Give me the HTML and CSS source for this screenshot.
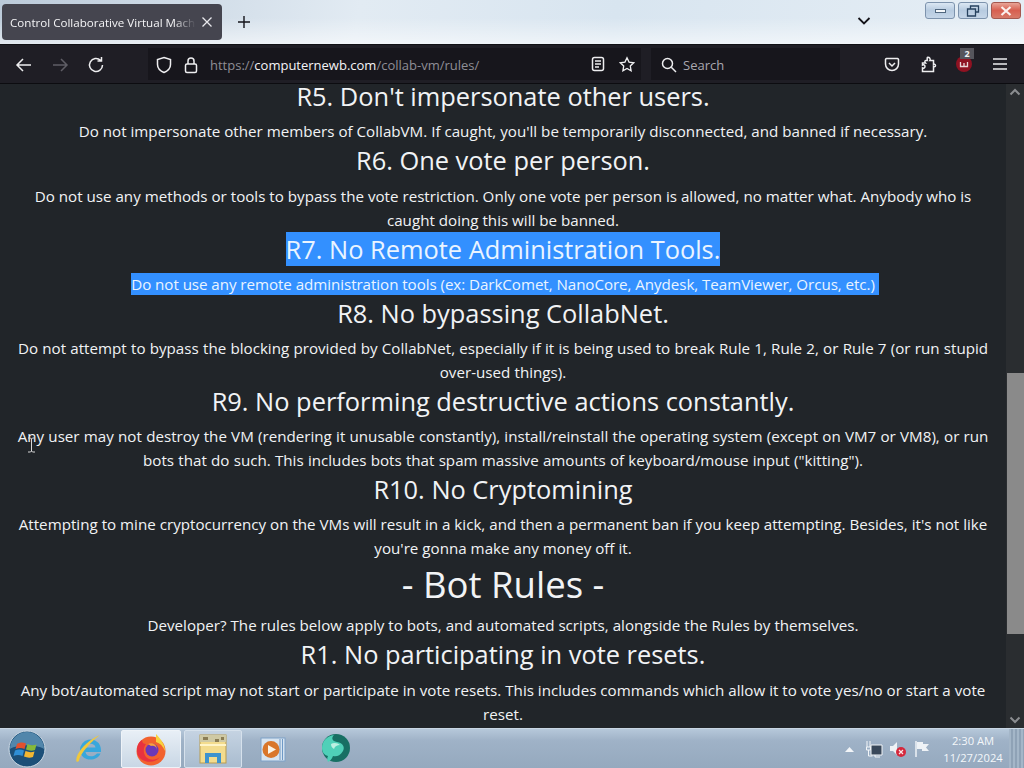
FILE: index.html
```html
<!DOCTYPE html>
<html lang="en">
<head>
    <meta charset="UTF-8">
    <title>Control Collaborative Virtual Machines</title>
    <link rel="stylesheet" href="styles.css">
</head>
<body>
    <div class="tabbar">
        <div class="tab">
            <span class="tab-title">Control Collaborative Virtual Machines</span>
            <svg class="tab-close" width="12" height="12" viewBox="0 0 12 12"><path d="M1.5 1.5l9 9M10.5 1.5l-9 9"/></svg>
        </div>
        <svg class="new-tab" width="14" height="14" viewBox="0 0 14 14"><path d="M7 1v12M1 7h12"/></svg>
        <svg class="tab-list" width="14" height="10" viewBox="0 0 14 10"><path d="M1.5 2l5.5 5.5L12.500 2"/></svg>
        <div class="win-buttons">
            <div class="win-btn"><span class="win-min"></span></div>
            <div class="win-btn">
                <svg width="14" height="12" viewBox="0 0 14 12"><path d="M4.500 3.500V1h8v6H10M1.500 4h8v7h-8z"/></svg>
            </div>
            <div class="win-btn win-close">
                <svg width="14" height="10" viewBox="0 0 14 10"><path d="M2.500 1l9 8M11.500 1l-9 8"/></svg>
            </div>
        </div>
    </div>

    <div class="toolbar">
        <svg class="tool first" width="18" height="16" viewBox="0 0 18 16"><path d="M16 8H2M8 2L2 8l6 6"/></svg>
        <svg class="tool dim" width="18" height="16" viewBox="0 0 18 16"><path d="M2 8h14M10 2l6 6-6 6"/></svg>
        <svg class="tool" width="18" height="18" viewBox="0 0 18 18"><path d="M15.500 9a6.500 6.500 0 1 1-2-4.700M14.500 1v4h-4"/></svg>
        <div class="urlbar">
            <svg class="tool" width="16" height="18" viewBox="0 0 16 18"><path d="M8 1.500l6.500 2v5c0 4-3 6.500-6.500 8-3.500-1.500-6.500-4-6.500-8v-5z"/></svg>
            <svg class="tool" width="14" height="18" viewBox="0 0 14 18"><rect x="1.500" y="8" width="11" height="8.500" rx="1.500"/><path d="M4 8V5a3 3 0 0 1 6 0v3"/></svg>
            <div class="url"><span>https://</span>computernewb.com<span>/collab-vm/rules/</span></div>
            <svg class="tool" width="14" height="16" viewBox="0 0 14 16"><rect x="1.500" y="1.500" width="11" height="13" rx="2"/><path d="M4 5h6M4 8h6M4 11h4"/></svg>
            <svg class="tool" width="16" height="16" viewBox="0 0 18 17"><path d="M9 1.500l2.300 4.900 5.200.7-3.800 3.700.9 5.300L9 13.500l-4.600 2.600.9-5.300L1.500 7.100l5.200-.7z"/></svg>
        </div>
        <div class="searchbar">
            <svg class="tool" width="16" height="16" viewBox="0 0 16 16"><circle cx="6.500" cy="6.500" r="5"/><path d="M10.300 10.300L15 15"/></svg>
            <span>Search</span>
        </div>
        <svg class="tool pocket" width="16" height="15" viewBox="0 0 16 15"><path d="M2.500 1.500h11a1.500 1.500 0 0 1 1 1v4.500a6.500 6.500 0 0 1-13 0V2.500a1.500 1.500 0 0 1 1-1z"/><path d="M5 6l3 3 3-3"/></svg>
        <svg class="tool puzzle" width="16" height="17" viewBox="0 0 16 17"><path d="M1.500 7h3c-1-1-.8-2.500.3-2.500h1.400V2c0-1 .800-1 1.800-.5 1 .5 1.500 2.500 1 3h3.500v4c1-.5 2-.2 2 1s-1 1.500-2 1v5H1.500v-3.500c1 .5 2.500 0 2.500-1.500S2.500 8.500 1.500 9z"/></svg>
        <div class="ublock">
            <svg width="18" height="18" viewBox="0 0 18 18"><circle cx="9" cy="9" r="8" fill="#8f1222"/><path d="M5.500 7v4.500h7V7M9 8v3" fill="none" stroke="#e9d5d8" stroke-width="1.300"/></svg>
            <span class="badge">2</span>
        </div>
        <svg class="tool menu" width="16" height="12" viewBox="0 0 16 12"><path d="M1 1h14M1 6h14M1 11h14"/></svg>
    </div>

    <div class="viewport">
        <div class="page">
            <div class="rules">
                <h3>R5. Don't impersonate other users.</h3>
                <p>Do not impersonate other members of CollabVM. If caught, you'll be temporarily disconnected, and banned if necessary.</p>
                <h3>R6. One vote per person.</h3>
                <p>Do not use any methods or tools to bypass the vote restriction. Only one vote per person is allowed, no matter what. Anybody who is caught doing this will be banned.</p>
                <h3><span class="picked picked-head">R7. No Remote Administration Tools.</span></h3>
                <p><span class="picked picked-line">Do not use any remote administration tools (ex: DarkComet, NanoCore, Anydesk, TeamViewer, Orcus, etc.)&nbsp;</span></p>
                <h3>R8. No bypassing CollabNet.</h3>
                <p class="wide">Do not attempt to bypass the blocking provided by CollabNet, especially if it is being used to break Rule 1, Rule 2, or Rule 7 (or run stupid over-used things).</p>
                <h3>R9. No performing destructive actions constantly.</h3>
                <p class="wide">Any user may not destroy the VM (rendering it unusable constantly), install/reinstall the operating system (except on VM7 or VM8), or run bots that do such. This includes bots that spam massive amounts of keyboard/mouse input ("kitting").</p>
                <h3>R10. No Cryptomining</h3>
                <p>Attempting to mine cryptocurrency on the VMs will result in a kick, and then a permanent ban if you keep attempting. Besides, it's not like you're gonna make any money off it.</p>
                <h1>- Bot Rules -</h1>
                <p>Developer? The rules below apply to bots, and automated scripts, alongside the Rules by themselves.</p>
                <h3>R1. No participating in vote resets.</h3>
                <p>Any bot/automated script may not start or participate in vote resets. This includes commands which allow it to vote yes/no or start a vote reset.</p>
            </div>
            <div class="scrollbar">
                <svg width="12" height="8" viewBox="0 0 12 8"><path d="M1.500 6.500L6 2l4.500 4.500"/></svg>
                <div class="track"><div class="thumb"></div></div>
                <svg width="12" height="8" viewBox="0 0 12 8"><path d="M1.500 1.500L6 6l4.500-4.500"/></svg>
            </div>
        </div>
        <svg class="cursor" width="9" height="16" viewBox="0 0 9 16"><path d="M1 1h2.500l1 1 1-1H8M4.500 2v12M1 15h2.500l1-1 1 1H8"/></svg>
    </div>

    <div class="taskbar">
        <svg class="start" width="38" height="38" viewBox="0 0 38 38">
            <circle cx="19" cy="19" r="18" fill="#1c4f78" stroke="#cfdbe6" stroke-width="1"/>
            <path d="M2 19a17 17 0 0 1 34 0c-8-5-26-5-34 0z" fill="#7fb5d6" opacity=".55"/>
            <path d="M9 14c3-2 6-2 9-.5l-1.500 5.500c-3-1.500-6-1.500-9 0z" fill="#e2512e"/>
            <path d="M19.500 14c3 1.500 6 1.500 9 .5l-1.500 5.500c-3 1-6 .8-9-.5z" fill="#86b93a"/>
            <path d="M7 20.500c3-1.500 6-1.500 9 0L14.500 26c-3-1.500-6-1.500-9 0z" fill="#2f8fd6"/>
            <path d="M17.500 21c3 1.300 6 1.500 9 .5L25 27c-3 1-6 .8-9-.5z" fill="#f2b632"/>
        </svg>
        <div class="task ie">
            <svg width="34" height="34" viewBox="0 0 34 34">
                <path d="M7 18a10.500 10.500 0 0 1 20-4.500c1 2.500 1 4.500 1 6.500H12.500c.5 5 7.500 6 11.500 1.500h3.500c-4 9-20 8-20.500-3.500zM12.500 15.500h10c-.5-5-9.500-5-10 0z" fill="#38a7dc"/>
                <path d="M4 30C1 26 9 11 27 3c-7 5-20 18-21 26z" fill="#f0c83c"/>
            </svg>
        </div>
        <div class="task active">
            <svg width="34" height="36" viewBox="0 0 34 36">
                <circle cx="17" cy="20" r="14.500" fill="#f2622e"/>
                <path d="M22 3c5 5 9 11 9 17-2-5-5-8-9-9z" fill="#f7d23e"/>
                <path d="M3 20c0-6 2-9 5-11 0 3 2 4 4 4-3 4-3 9 0 13 3 3 9 4 14 0-5 8-23 6-23-6z" fill="#e8323f"/>
                <circle cx="18" cy="19" r="6.500" fill="#6a38b8"/>
                <path d="M14 13c5-2 9 1 9 6 0-3-3-5-6-4z" fill="#f9a33a"/>
            </svg>
        </div>
        <div class="task opened">
            <svg width="34" height="34" viewBox="0 0 34 34">
                <rect x="4" y="3" width="26" height="28" fill="#f3dc8e" stroke="#b79b50"/>
                <path d="M4 3h26v7H4z" fill="#cfc9a4"/>
                <path d="M7 5h5v3H7zM19 7h4v3h-4zM25 5h3v3h-3z" fill="#8b7d55"/>
                <path d="M4 13h26" stroke="#fff4c8" stroke-width="2"/>
                <path d="M9 31V21h16v10h-4v-6h-8v6z" fill="#3d93cf"/>
            </svg>
        </div>
        <div class="task">
            <svg width="26" height="26" viewBox="0 0 26 26">
                <rect x="1" y="2" width="24" height="23" fill="#d7e4f0" stroke="#7fa2c8"/>
                <path d="M20 3v21M22.500 3v21" stroke="#6f99c6"/>
                <circle cx="11" cy="13.500" r="8.500" fill="#d9762a"/>
                <path d="M8 9l8 4.500L8 18z" fill="#fbf3e4"/>
            </svg>
        </div>
        <div class="task">
            <svg width="34" height="32" viewBox="0 0 34 32">
                <circle cx="18" cy="15" r="14" fill="#176f63"/>
                <path d="M4 15C4 8 9 3 16 2c-3 3-2 6 3 7 6 1 8 5 6 9-3 5-7 6-10 5-1 3-3 5-5 6-1-2-1-4 0-6-4-1-6-4-6-8z" fill="#4fd0b8"/>
                <path d="M13 11c3-2 7-1 9 1-3 0-5 1-6 4-2-1-3-3-3-5z" fill="#bdf0e2"/>
            </svg>
        </div>
        <div class="tray">
            <svg class="tray-up" width="9" height="6" viewBox="0 0 9 6"><path d="M0 6l4.500-5L9 6z"/></svg>
            <svg width="18" height="18" viewBox="0 0 18 18">
                <path d="M6 5h11v10H6z" fill="#39485a" stroke="#f2f5f8"/>
                <path d="M10 15v2h5M2 1v6M5 1v6M1.500 7h4v3h-4zM3.500 10v6h4" fill="none" stroke="#f2f5f8"/>
            </svg>
            <svg width="18" height="18" viewBox="0 0 18 18">
                <path d="M1 6h3l4-4v13l-4-4H1z" fill="#eef2f6"/>
                <circle cx="12" cy="12" r="5" fill="#d5283c"/>
                <path d="M10 10l4 4M14 10l-4 4" stroke="#fbe6e8" stroke-width="1.200"/>
            </svg>
            <svg width="18" height="18" viewBox="0 0 18 18">
                <path d="M3 1v16" stroke="#eef2f6" stroke-width="1.500"/>
                <path d="M4 2h6v2h6l-3 3.500 3 3.500H9V9H4z" fill="#eef2f6"/>
            </svg>
            <div class="clock">
                <div>2:30 AM</div>
                <div>11/27/2024</div>
            </div>
            <div class="show-desktop"></div>
        </div>
    </div>
</body>
</html>
```

FILE: styles.css
```css
* {
    margin: 0;
    padding: 0;
    box-sizing: border-box;
}

html, body {
    width: 1024px;
    height: 768px;
    overflow: hidden;
}

body {
    display: flex;
    flex-direction: column;
    font-family: "Open Sans", "Noto Sans", sans-serif;
    background: #212529;
}

/* top strip */
.tabbar {
    height: 44px;
    display: flex;
    align-items: flex-start;
    background: linear-gradient(180deg, rgba(255,255,255,0) 40%, rgba(255,255,255,.55) 100%),
        linear-gradient(100deg, #bccbda 0%, #e2ebf3 35%, #d8e5f0 60%, #e6eef5 100%);
    position: relative;
}

.tab {
    width: 220px;
    height: 36px;
    margin: 4px 0 0 2px;
    padding: 0 9px 0 8px;
    display: flex;
    align-items: center;
    justify-content: space-between;
    background: #45454f;
    border-radius: 4px;
    color: #f4f4f6;
    font-size: 11.600px;
}

.tab-title {
    width: 186px;
    white-space: nowrap;
    overflow: hidden;
    -webkit-mask-image: linear-gradient(90deg, #000 88%, transparent);
    mask-image: linear-gradient(90deg, #000 88%, transparent);
}

.tab-close {
    fill: none;
    stroke: #e8e8ec;
    stroke-width: 1.300;
}

.new-tab {
    margin: 15px 0 0 15px;
    fill: none;
    stroke: #15141a;
    stroke-width: 1.400;
}

.tab-list {
    margin: 16px 0 0 606px;
    fill: none;
    stroke: #15141a;
    stroke-width: 1.800;
}

.win-buttons {
    margin-left: auto;
    margin-right: 3px;
    margin-top: 2px;
    display: flex;
    gap: 3px;
}

.win-btn {
    width: 30px;
    height: 17px;
    display: flex;
    align-items: center;
    justify-content: center;
    border: 1px solid #7d93ad;
    border-radius: 3px;
    background: linear-gradient(#dbe7f3, #b7cbe0 50%, #c5d6e8);
}

.win-btn svg {
    fill: none;
    stroke: #27425f;
    stroke-width: 1.300;
}

.win-min {
    width: 11px;
    height: 4px;
    background: #f4f7fa;
    border: 1px solid #50677f;
}

.win-close {
    border-color: #a4584f;
    background: linear-gradient(#e8a497, #d75f50 50%, #d77a68);
}

.win-close svg {
    stroke: #fbf1ee;
    stroke-width: 2.200;
}

/* firefox toolbar */
.toolbar {
    height: 40px;
    display: flex;
    align-items: center;
    background: #1f1e25;
    border-top: 1px solid #101014;
    border-bottom: 1px solid #0c0c10;
}

.tool {
    flex: none;
    fill: none;
    stroke: #eeeef0;
    stroke-width: 1.500;
}

.tool.first {
    margin-left: 15px;
    margin-top: 2px;
}

.tool.first + .tool {
    margin-left: 18px;
}

.tool.dim {
    stroke: #5f5e66;
    margin-top: 2px;
}

.tool.dim + .tool {
    margin-left: 18px;
    margin-top: 2px;
}

.urlbar {
    width: 493px;
    height: 32px;
    margin-left: 43px;
    padding: 0 6px 0 8px;
    display: flex;
    align-items: center;
    background: #17161c;
}

.urlbar .tool:nth-child(-n+2) {
    margin-top: 2px;
}

.urlbar .tool:nth-child(2) {
    margin-left: 12px;
}

.url {
    margin-left: 12px;
    margin-top: 2px;
    flex: 1;
    color: #f4f4f6;
    font-size: 13px;
    white-space: nowrap;
}

.url span {
    color: #8f8e96;
}

.urlbar .tool:nth-child(4) {
    margin-right: 14px;
}

.searchbar {
    width: 189px;
    height: 32px;
    margin-left: 10px;
    padding: 2px 0 0 10px;
    display: flex;
    align-items: center;
    gap: 6px;
    background: #17161c;
    color: #a9a8b0;
    font-size: 13px;
}

.pocket {
    margin-left: 44px;
}

.puzzle {
    margin-left: 21px;
}

.ublock {
    margin-left: 18px;
    position: relative;
    width: 18px;
    height: 18px;
}

.badge {
    position: absolute;
    left: 5px;
    top: -7px;
    width: 14px;
    height: 11px;
    background: #55555c;
    color: #f2f2f4;
    font-size: 9px;
    font-weight: 700;
    line-height: 11px;
    text-align: center;
}

.menu {
    margin-left: 19px;
}

/* page content */
.viewport {
    height: 644px;
    position: relative;
    overflow: hidden;
}

.page {
    height: 100%;
    display: flex;
}

.rules {
    width: 1006px;
    height: 100%;
    padding: 0 12px;
    overflow: hidden;
    color: #f1f3f5;
    text-align: center;
}

.rules h3 {
    font-size: 25.400px;
    font-weight: 400;
    line-height: 32.200px;
    margin-bottom: 7px;
}

/* first heading is scrolled partly under the toolbar */
.rules h3:first-child {
    line-height: 24.400px;
    margin-bottom: 11px;
}

.rules h1 {
    font-size: 36.500px;
    font-weight: 400;
    line-height: 47px;
    margin-bottom: 5px;
}

.rules p {
    font-size: 15.170px;
    line-height: 24px;
    padding-bottom: 1px;
}

.rules p.wide {
    word-spacing: 0.300px;
}

.rules h1 + p {
    padding-bottom: 1px;
}

.picked {
    background: #3390ff;
    color: #eaf4ff;
    padding: 1px 0;
}

.picked-head {
    padding: 0;
}

.picked-line {
    letter-spacing: -0.060px;
    margin-left: 4px;
}

.scrollbar {
    width: 18px;
    display: flex;
    flex-direction: column;
    align-items: center;
    background: #2a2d30;
}

.scrollbar svg {
    flex: none;
    margin: 4px 0;
    fill: none;
    stroke: #8b8d90;
    stroke-width: 2;
}

.track {
    flex: 1;
    width: 100%;
    padding-top: 273px;
}

.thumb {
    height: 261px;
    margin-left: 1px;
    background: #8a8a8a;
}

.cursor {
    position: absolute;
    left: 27px;
    top: 353px;
    fill: none;
    stroke: #d8d8d8;
}

/* windows taskbar */
.taskbar {
    height: 40px;
    display: flex;
    align-items: center;
    background: linear-gradient(#b6c8da, #9fb2c7 30%, #95a9be);
    border-top: 1px solid #c8d6e3;
}

.start {
    margin-left: 8px;
    flex: none;
}

.task {
    width: 62px;
    height: 38px;
    display: flex;
    align-items: center;
    justify-content: center;
}

.task.ie {
    margin-left: 15px;
    width: 58px;
}

.task.active {
    background: linear-gradient(#e8eff6, #c9d7e5);
    border: 1px solid #eef3f8;
    border-radius: 2px;
    margin-left: 2px;
    width: 60px;
}

.task.opened {
    background: linear-gradient(#c5d3e2, #a9bccf);
    border: 1px solid #d6e1ec;
    border-radius: 2px;
    margin-left: 3px;
    width: 58px;
}

.tray {
    margin-left: auto;
    height: 100%;
    display: flex;
    align-items: center;
    gap: 6px;
}

.tray-up {
    fill: #f2f5f8;
    margin-right: 5px;
}

.clock {
    width: 60px;
    margin-left: 6px;
    color: #f4f7fa;
    font-size: 11.200px;
    line-height: 17px;
    text-align: center;
}

.show-desktop {
    width: 15px;
    height: 100%;
    background: repeating-linear-gradient(90deg, #a4b6c8 0 2px, #8fa2b6 2px 4px);
}
```
